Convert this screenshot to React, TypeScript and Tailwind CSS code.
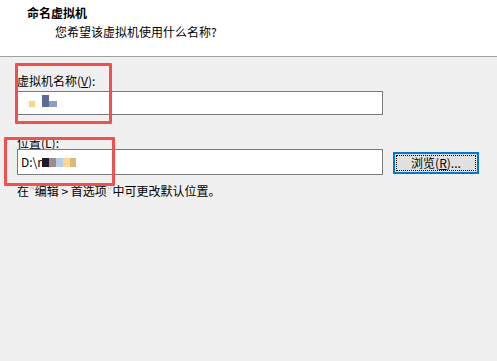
import React from 'react';

const font = { fontFamily: '"Microsoft YaHei", "Noto Sans CJK SC", sans-serif' };

const Blot = ({ c, w = 6, h = 6 }: { c: string; w?: number; h?: number }) => (
    <span className="inline-block" style={{ backgroundColor: c, width: w, height: h }} />
);

export default function App() {
    return <div className="relative w-[497px] h-[361px] bg-[#f0f0f0] text-[12px] text-black overflow-hidden" style={font}>
        <div className="h-[57px] bg-white border-b border-[#a0a0a0]">
            <div className="pl-[27px] pt-[5px] font-bold leading-[16px]">命名虚拟机</div>
            <div className="pl-[55px] pt-[3px] leading-[16px]">您希望该虚拟机使用什么名称?</div>
        </div>

        <div className="px-[17px]">
            <div className="mt-[16px] leading-[16px]">虚拟机名称(<span className="underline">V</span>):</div>
            <div className="mt-[2px] w-[366px] h-[24px] bg-white border border-[#7a7a7a] flex items-end pl-[11px] pb-[7px]">
                <Blot c="#f5d58a" w={6} h={6} />
                <span className="w-[7px]" />
                <div className="flex flex-col">
                    <Blot c="#5f6a9c" w={7} h={6} />
                    <div className="flex"><Blot c="#5f6a9c" w={7} h={6} /><Blot c="#8aa0c0" w={8} h={6} /></div>
                </div>
            </div>

            <div className="mt-[20px] leading-[16px]">位置(<span className="underline">L</span>):</div>
            <div className="flex items-center gap-[10px] mt-[-2px]">
                <div className="w-[366px] h-[26px] bg-white border border-[#7a7a7a] flex items-center pl-[3px] leading-[16px]">
                    <span>D:\r</span>
                    <Blot c="#1c1c2c" w={7} h={9} />
                    <Blot c="#a08a8a" w={7} h={9} />
                    <Blot c="#b4cce4" w={7} h={9} />
                    <Blot c="#f8d890" w={7} h={9} />
                    <Blot c="#dcb87a" w={6} h={9} />
                </div>
                <button className="w-[86px] h-[22px] mt-[1px] bg-[#e1e1e1] border-2 border-[#0078d7] p-[1px] leading-none">
                    <div className="w-full h-full border border-dotted border-black flex items-center justify-center">
                        浏览(<span className="underline">R</span>)...
                    </div>
                </button>
            </div>
            <div className="mt-[8px] leading-[16px]">在<span className="text-[#c8c8c8]">"</span>编辑 &gt; 首选项<span className="text-[#c8c8c8]">"</span>中可更改默认位置。</div>
        </div>

        <div className="absolute left-[15px] top-[63px] w-[97px] h-[61px] border-[3px] border-[#f24f4f] rounded-[1px]" />
        <div className="absolute left-[4px] top-[137px] w-[111px] h-[49px] border-[3px] border-[#f24f4f] rounded-[1px]" />
    </div>
}
